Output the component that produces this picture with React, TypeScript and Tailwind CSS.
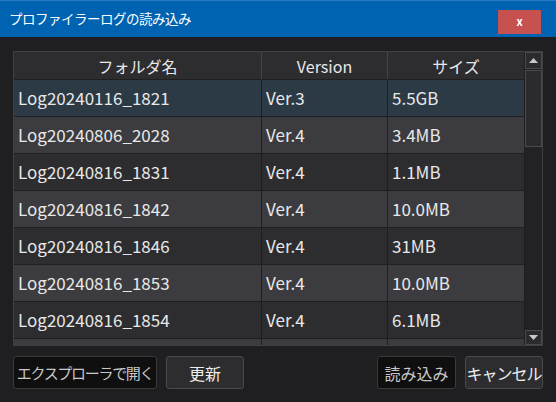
import React from 'react';

const ROWS = [
  { name: 'Log20240116_1821', ver: 'Ver.3', size: '5.5GB' },
  { name: 'Log20240806_2028', ver: 'Ver.4', size: '3.4MB' },
  { name: 'Log20240816_1831', ver: 'Ver.4', size: '1.1MB' },
  { name: 'Log20240816_1842', ver: 'Ver.4', size: '10.0MB' },
  { name: 'Log20240816_1846', ver: 'Ver.4', size: '31MB' },
  { name: 'Log20240816_1853', ver: 'Ver.4', size: '10.0MB' },
  { name: 'Log20240816_1854', ver: 'Ver.4', size: '6.1MB' },
];

const font = "font-['Noto_Sans_CJK_JP','Noto_Sans',sans-serif]";

export default function App() {
  return (
    <div className={`w-[556px] h-[402px] bg-[#1f1f21] flex flex-col text-[#e8e8e8] ${font}`}>
      {/* title bar */}
      <div className="h-[37px] bg-[#0063b1] border-t border-[#2a7bc4] flex items-center justify-between pl-[9px] pr-[15px]">
        <span className="text-[13.5px] text-white leading-none tracking-[-0.5px]">プロファイラーログの読み込み</span>
        <button className="w-[43px] h-[24px] mt-[5px] bg-[#c75050] flex items-center justify-center text-white text-[11px] font-bold leading-none">
          x
        </button>
      </div>

      <div className="flex-1 flex flex-col px-[13px] pt-[14px]">
        {/* table */}
        <div className="h-[295px] flex border border-[#3f3f42] bg-[#1f1f21] overflow-hidden">
          <div className="w-[510px] flex flex-col">
            <div className="h-[28px] flex bg-[#2d2d30] border-b border-[#1f1f21] text-[16px] shrink-0">
              <div className="w-[248px] border-r border-[#444447] flex items-center justify-center">フォルダ名</div>
              <div className="w-[126px] border-r border-[#444447] flex items-center justify-center">Version</div>
              <div className="flex-1 flex items-center justify-center">サイズ</div>
            </div>
            {ROWS.map((r, i) => (
              <div
                key={r.name}
                className={`h-[37px] shrink-0 flex border-b border-[#1f1f21] text-[17px] ${
                  i === 0 ? 'bg-[#2c3a45]' : i % 2 === 1 ? 'bg-[#3c3c40]' : 'bg-[#2d2d30]'
                }`}
              >
                <div className="w-[248px] border-r border-[#1f1f21] flex items-center pl-[4px]">{r.name}</div>
                <div className="w-[126px] border-r border-[#1f1f21] flex items-center pl-[4px]">{r.ver}</div>
                <div className="flex-1 flex items-center pl-[4px]">{r.size}</div>
              </div>
            ))}
            <div className="h-[37px] shrink-0 flex bg-[#3c3c40]">
              <div className="w-[248px] border-r border-[#1f1f21]" />
              <div className="w-[126px] border-r border-[#1f1f21]" />
              <div className="flex-1" />
            </div>
          </div>
          {/* scrollbar */}
          <div className="w-[17px] ml-[1px] flex flex-col bg-[#222224]">
            <div className="h-[17px] border border-[#4a4a4d] bg-[#2b2b2e] flex items-center justify-center">
              <svg width="9" height="5" viewBox="0 0 9 5"><path d="M4.5 0L9 5H0Z" fill="#c8c8c8" /></svg>
            </div>
            <div className="h-[77px] mt-[1px] border border-[#4a4a4d] bg-[#2b2b2e]" />
            <div className="flex-1" />
            <div className="h-[15px] border border-[#4a4a4d] bg-[#2b2b2e] flex items-center justify-center">
              <svg width="9" height="5" viewBox="0 0 9 5"><path d="M0 0H9L4.5 5Z" fill="#c8c8c8" /></svg>
            </div>
          </div>
        </div>

        {/* buttons */}
        <div className="mt-[10px] flex h-[33px] text-[16px] whitespace-nowrap">
          <button className="w-[144px] border border-[#3a3a3c] rounded-[3px] bg-[#0f0f10] text-[#c8c8c8] flex items-center justify-center leading-none text-[15px] tracking-[-1.3px]">
            エクスプローラで開く
          </button>
          <button className="w-[78px] ml-[9px] border border-[#4a4a4d] rounded-[3px] bg-[#2d2d30] text-[#eeeeee] flex items-center justify-center leading-none">
            更新
          </button>
          <div className="flex-1" />
          <button className="w-[79px] border border-[#3a3a3c] rounded-[3px] bg-[#0f0f10] text-[#c8c8c8] flex items-center justify-center leading-none">
            読み込み
          </button>
          <button className="w-[78px] ml-[9px] border border-[#4a4a4d] rounded-[3px] bg-[#2d2d30] text-[#eeeeee] flex items-center justify-center leading-none tracking-[-1px]">
            キャンセル
          </button>
        </div>
      </div>
    </div>
  );
}
